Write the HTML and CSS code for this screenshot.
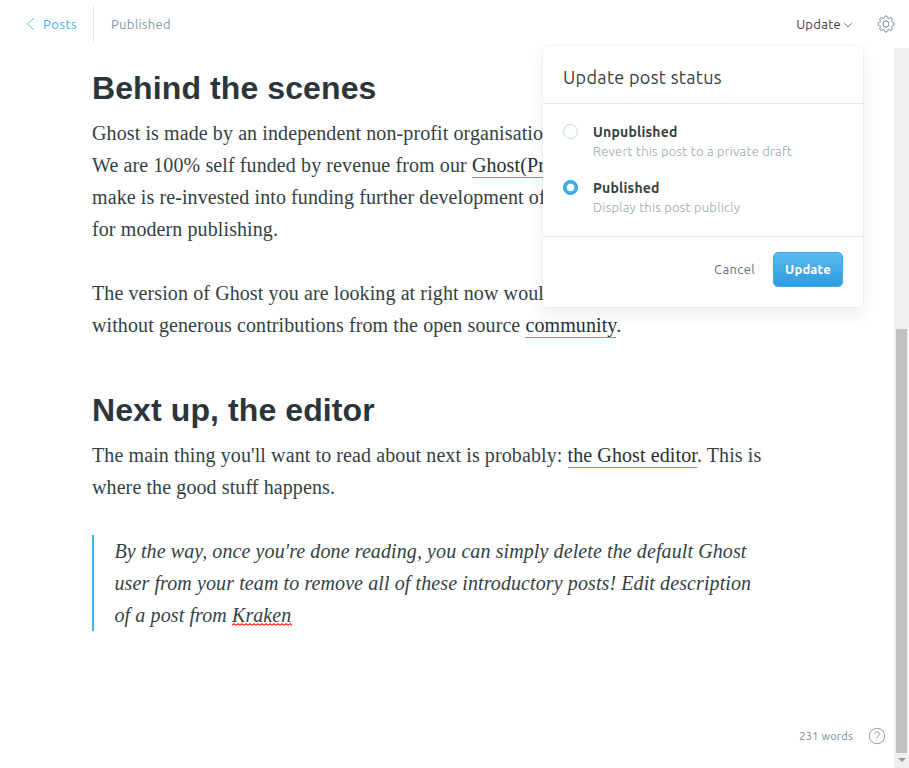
FILE: index.html
```html
<!DOCTYPE html>
<html lang="en">
<head>
<meta charset="utf-8">
<title>Editor</title>
<link rel="stylesheet" href="styles.css">
</head>
<body>
<div class="app">
  <header class="topbar">
    <a class="back"><svg width="9" height="14" viewBox="0 0 9 14"><path d="M8 1.200 1.200 7 8 12.800"/></svg><span>Posts</span></a>
    <span class="state">Published</span>
    <div class="actions">
      <button class="trigger"><span>Update</span><svg width="10" height="7" viewBox="0 0 10 7"><path d="m1 2 4 4 4-4"/></svg></button>
      <svg class="gear" width="18" height="18" viewBox="0 0 18 18"><path d="M7.1 2.6Q7.5.9 9 .9t1.9 1.7q.3 1.2 1.6.6 1.4-.9 2.3 0t0 2.3q-.6 1.3.6 1.6 1.7.4 1.7 1.9t-1.7 1.9q-1.2.3-.6 1.6.9 1.4 0 2.3t-2.3 0q-1.3-.6-1.6.6-.4 1.7-1.9 1.7t-1.9-1.7q-.3-1.2-1.6-.6-1.4.9-2.3 0t0-2.3q.6-1.3-.6-1.6Q.9 10.5.9 9t1.7-1.9q1.2-.3.6-1.6-.9-1.4 0-2.3t2.3 0q1.3.6 1.6-.6Z"/><circle cx="9" cy="9" r="3"/></svg>
    </div>
  </header>
  <div class="workspace">
    <main class="editor">
      <h2>Behind the scenes</h2>
      <p>Ghost is made by an independent non-profit organisation<br>We are 100% self funded by revenue from our <a>Ghost(Pro)</a><br>make is re-invested into funding further development of<br>for modern publishing.</p>
      <p>The version of Ghost you are looking at right now would<br>without generous contributions from the open source <a>community</a>.</p>
      <h2 class="next">Next up, the editor</h2>
      <p>The main thing you'll want to read about next is probably: <a>the Ghost editor</a>. This is<br>where the good stuff happens.</p>
      <blockquote>By the way, once you're done reading, you can simply delete the default Ghost<br>user from your team to remove all of these introductory posts! Edit description<br>of a post from <span class="misspelled">Kraken<svg width="60" height="3"><defs><pattern id="wave" width="4" height="3" patternUnits="userSpaceOnUse"><path d="M0 2.3 2 .7l2 1.6"/></pattern></defs><rect width="60" height="3" fill="url(#wave)"/></svg></span></blockquote>
    </main>
    <div class="scrollbar"><div class="thumb"></div><i></i></div>
  </div>
  <footer class="status">
    <span>231 words</span>
    <svg width="18" height="18" viewBox="0 0 18 18"><circle cx="9" cy="9" r="7.7"/><path d="M6.6 7.1c0-1.5 1-2.4 2.4-2.4s2.4.9 2.4 2.2c0 1.7-2.3 1.9-2.3 3.9"/><path d="M9 12.2v1.1"/></svg>
  </footer>
  <section class="popover">
    <h3><span>Update post status</span></h3>
    <div class="options">
      <div class="option"><i class="radio"></i><div><strong>Unpublished</strong><small>Revert this post to a private draft</small></div></div>
      <div class="option"><i class="radio on"></i><div><strong>Published</strong><small>Display this post publicly</small></div></div>
    </div>
    <div class="buttons"><button class="cancel">Cancel</button><button class="update">Update</button></div>
  </section>
</div>
</body>
</html>
```
FILE: styles.css
```css
* { box-sizing: border-box; }
body { margin: 0; background: #fff; color: #343f44; font-family: Ubuntu, "Noto Sans", sans-serif; }
button { border: 0; background: none; padding: 0; font: inherit; color: inherit; letter-spacing: inherit; }
svg { fill: none; stroke: #738a94; display: block; flex: none; }
.app { position: relative; width: 909px; height: 768px; overflow: hidden; display: flex; flex-direction: column; letter-spacing: .2px; }
.topbar { height: 48px; flex: none; display: flex; align-items: center; font-size: 13px; }
.back { width: 94px; height: 36px; padding-left: 26px; border-right: 1px solid #dfe9f1; display: flex; align-items: center; gap: 8px; color: #3eb0ef; letter-spacing: .5px; }
.back svg { stroke: #3eb0ef; stroke-width: .8; }
.state { margin-left: 17px; color: #8297a2; letter-spacing: .3px; }
.actions { margin-left: auto; padding-right: 14px; display: flex; align-items: center; gap: 24px; }
.trigger { display: flex; align-items: center; gap: 2px; letter-spacing: .3px; }
.gear { stroke-width: 1; stroke-linejoin: round; }
.workspace { flex: 1; display: flex; justify-content: space-between; min-height: 0; }
.editor { padding: 21px 0 0 92px; white-space: nowrap; font: 20px/32px "Liberation Serif", serif; letter-spacing: .1px; }
.editor h2 { margin: 0 0 8px; font: bold 32px/38px "Liberation Sans", sans-serif; padding-bottom: 2px; color: #2b353a; }
.editor .next { margin-top: 50px; }
.editor p { margin: 0 0 32px; }
.editor a { color: #262f33; padding-bottom: 1px; border-bottom: 1px solid #3eb0ef; }
blockquote { margin: 0; padding-left: 20.5px; border-left: 2px solid #3eb0ef; font-style: italic; }
.misspelled { position: relative; }
.misspelled svg { position: absolute; left: 0; bottom: 0; stroke: none; }
.misspelled path { stroke: #f22; stroke-width: 1.1; }
.scrollbar { width: 15px; padding: 281px 2px 0; background: #f0f0f0; display: flex; flex-direction: column; align-items: center; }
.thumb { width: 11px; height: 424px; background: #c1c1c1; }
.scrollbar i { margin-top: 5px; border: 4px solid transparent; border-top-color: #999; border-bottom: 0; }
.status { position: absolute; right: 23px; bottom: 22px; height: 20px; display: flex; align-items: center; gap: 15px; color: #738a94; font-size: 11px; letter-spacing: .25px; }
.status svg { stroke-width: .8; }
.popover { position: absolute; left: 543px; top: 46px; width: 320px; height: 261px; border-radius: 4px; background: #fff; box-shadow: 0 0 0 1px rgba(99,114,130,.06), 0 8px 16px rgba(27,39,51,.08); }
.popover h3 { margin: 0; height: 58px; padding: 5px 20px 0; border-bottom: 1px solid #dfe9f1; display: flex; align-items: center; font-weight: 400; font-size: 18px; letter-spacing: .33px; }
.options { height: 133px; padding: 18px 20px 0; border-bottom: 1px solid #dfe9f1; }
.option { height: 56px; display: flex; gap: 15px; }
.radio { width: 15px; height: 15px; margin-top: 2px; border: 1px solid #c2dcee; border-radius: 50%; }
.radio.on { border-color: #1f93d8; background: radial-gradient(circle, #fff 3.5px, #3eb0ef 4.2px); }
.option strong, .option small { display: block; font-size: 13px; line-height: 20px; }
.option strong { font-weight: 600; font-size: 14px; letter-spacing: .2px; }
.option small { margin-top: -1px; color: #95a7af; font-weight: 300; letter-spacing: .24px; }
.buttons { padding: 15px 20px 0; display: flex; justify-content: flex-end; align-items: center; gap: 18px; font-size: 13px; }
.buttons button { padding-bottom: 2px; letter-spacing: .38px; }
.cancel { color: #5d7179; }
.buttons .update { width: 70px; height: 35px; border: 1px solid #3ea8e8; border-radius: 5px; background: linear-gradient(#5bb9f0, #2a9de0); color: #fff; font-weight: 600; letter-spacing: .2px; }
```
